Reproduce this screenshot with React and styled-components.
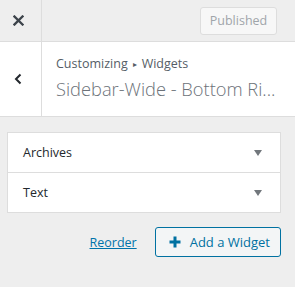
import styled, { createGlobalStyle } from "styled-components";

const GlobalStyle = createGlobalStyle`
  html, body {
    margin: 0;
    padding: 0;
    background: #eeeeee;
  }
  body {
    font-family: "Open Sans", "Noto Sans", sans-serif;
    font-size: 12.5px;
    color: #32373c;
  }
`;

const WIDGETS = ["Archives", "Text"];

function App() {
  return (
    <>
      <GlobalStyle />
      <St.Sidebar>
        <St.Header>
          <St.IconButton aria-label="Close">
            <svg width="11" height="11" viewBox="0 0 11 11">
              <path
                d="M1.5 1.5 L9.5 9.5 M9.5 1.5 L1.5 9.5"
                stroke="#3c434a"
                strokeWidth="2.3"
                strokeLinecap="square"
              />
            </svg>
          </St.IconButton>
          <St.HeaderActions>
            <St.PublishButton disabled>Published</St.PublishButton>
          </St.HeaderActions>
        </St.Header>

        <St.TitlePanel>
          <St.IconButton aria-label="Back">
            <svg width="10" height="14" viewBox="0 0 10 14">
              <path
                d="M7.5 2.5 L3 7 L7.5 11.5"
                stroke="#23282d"
                strokeWidth="2"
                fill="none"
              />
            </svg>
          </St.IconButton>
          <St.TitleText>
            <St.Breadcrumb>
              Customizing<St.Arrow>▸</St.Arrow>Widgets
            </St.Breadcrumb>
            <St.Title>Sidebar-Wide - Bottom Ri...</St.Title>
          </St.TitleText>
        </St.TitlePanel>

        <St.Content>
          <St.WidgetList>
            {WIDGETS.map((name) => (
              <St.WidgetRow key={name}>
                <span>{name}</span>
                <St.Caret />
              </St.WidgetRow>
            ))}
          </St.WidgetList>

          <St.Actions>
            <St.Reorder href="#">Reorder</St.Reorder>
            <St.AddButton>
              <svg width="12" height="12" viewBox="0 0 12 12">
                <path d="M6 0.5 V11.5 M0.5 6 H11.5" stroke="#0071a1" strokeWidth="3" />
              </svg>
              Add a Widget
            </St.AddButton>
          </St.Actions>
        </St.Content>
      </St.Sidebar>
    </>
  );
}

export default App;

const St = {
  Sidebar: styled.div`
    width: 295px;
    height: 287px;
    background: #eeeeee;
    overflow: hidden;
  `,

  /* top bar */
  Header: styled.header`
    display: flex;
    height: 41px;
    border-bottom: 1px solid #dddddd;
    background: #eeeeee;
  `,

  IconButton: styled.button`
    display: flex;
    align-items: center;
    justify-content: center;
    flex: none;
    width: 42px;
    padding: 0 5px 0 0;
    border: none;
    border-right: 1px solid #dddddd;
    background: transparent;
    cursor: pointer;
  `,

  HeaderActions: styled.div`
    flex: 1;
    display: flex;
    align-items: center;
    justify-content: flex-end;
    padding-right: 18px;
  `,

  PublishButton: styled.button`
    height: 28px;
    width: 77px;
    padding: 0;
    border: 1px solid #dddddd;
    border-radius: 3px;
    background: #f7f7f7;
    color: #a0a5aa;
    font-family: inherit;
    font-size: 12.5px;
  `,

  /* panel title */
  TitlePanel: styled.div`
    display: flex;
    height: 74px;
    background: #ffffff;
    border-bottom: 1px solid #dddddd;
  `,

  TitleText: styled.div`
    flex: 1;
    min-width: 0;
    display: flex;
    flex-direction: column;
    justify-content: center;
    padding: 0 8px 0 14px;
  `,

  Breadcrumb: styled.div`
    font-size: 12.5px;
    line-height: 20px;
    color: #555d66;
  `,

  Arrow: styled.span`
    font-size: 8px;
    vertical-align: 1px;
    padding: 0 5px;
  `,

  Title: styled.div`
    font-size: 18.3px;
    font-weight: 300;
    line-height: 30px;
    color: #6c7279;
    white-space: nowrap;
  `,

  /* widgets */
  Content: styled.div`
    padding: 15px 14px 0 7px;
  `,

  WidgetList: styled.div`
    background: #ffffff;
    border: 1px solid #dddddd;
  `,

  WidgetRow: styled.div`
    display: flex;
    align-items: center;
    justify-content: space-between;
    height: 39px;
    padding: 0 18px 0 15px;
    font-size: 12.5px;
    color: #23282d;

    & + & {
      border-top: 1px solid #dddddd;
    }
  `,

  Caret: styled.span`
    width: 0;
    height: 0;
    border-left: 4px solid transparent;
    border-right: 4px solid transparent;
    border-top: 6px solid #72777c;
  `,

  Actions: styled.div`
    display: flex;
    align-items: center;
    justify-content: flex-end;
    gap: 18px;
    margin-top: 14px;
  `,

  Reorder: styled.a`
    color: #0073aa;
    font-size: 12.5px;
    text-decoration: underline;
  `,

  AddButton: styled.button`
    display: flex;
    align-items: center;
    gap: 9px;
    height: 30px;
    padding: 0 10px 0 13px;
    border: 1px solid #0071a1;
    border-radius: 3px;
    background: #f3f5f6;
    color: #0071a1;
    font-family: inherit;
    font-size: 13px;
    cursor: pointer;
  `,
};
